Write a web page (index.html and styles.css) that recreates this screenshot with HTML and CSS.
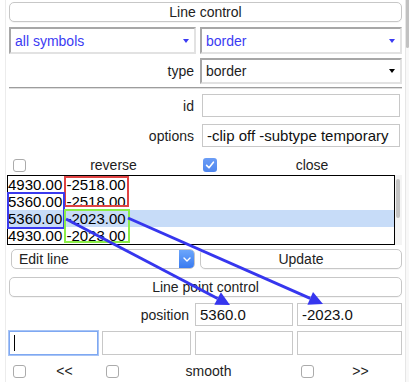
FILE: index.html
```html
<!DOCTYPE html>
<html lang="en">
<head>
    <meta charset="UTF-8">
    <title>Line control</title>
    <link rel="stylesheet" href="styles.css">
</head>
<body>
    <div class="app">
        <div class="panel">
            <button class="bar-btn row-a">Line control</button>

            <div class="pair row-b">
                <div class="select blue"><span>all symbols</span><i class="tri"></i></div>
                <div class="select blue"><span>border</span><i class="tri"></i></div>
            </div>

            <div class="pair row-c">
                <label class="lbl">type</label>
                <div class="select"><span>border</span><i class="tri"></i></div>
            </div>

            <hr class="sep">

            <div class="pair row-d">
                <label class="lbl">id</label>
                <div class="entry inset"></div>
            </div>

            <div class="pair row-e">
                <label class="lbl">options</label>
                <div class="entry inset">-clip off -subtype temporary</div>
            </div>

            <div class="pair row-f">
                <div class="check"><span class="box"></span><span class="check-text">reverse</span></div>
                <div class="check">
                    <span class="box on">
                        <svg width="14" height="14" viewBox="0 0 14 14"><path d="M3.6 7.4 L6 9.8 L10.4 4.2" fill="none" stroke="#fff" stroke-width="1.6" stroke-linecap="round" stroke-linejoin="round"/></svg>
                    </span>
                    <span class="check-text">close</span>
                </div>
            </div>

            <div class="list-row">
                <div class="listbox">
                    <div class="item">4930.00 -2518.00</div>
                    <div class="item">5360.00 -2518.00</div>
                    <div class="item sel">5360.00 -2023.00</div>
                    <div class="item">4930.00 -2023.00</div>
                </div>
                <div class="list-scroll"><div class="thumb"></div></div>
            </div>

            <div class="pair row-h">
                <div class="menubtn">
                    <span class="menu-text">Edit line</span>
                    <span class="menu-arrow">
                        <svg width="8" height="5" viewBox="0 0 8 5"><path d="M1 1 L4 4 L7 1" fill="none" stroke="#fff" stroke-width="1.4" stroke-linecap="round" stroke-linejoin="round"/></svg>
                    </span>
                </div>
                <button class="bar-btn">Update</button>
            </div>

            <button class="bar-btn row-i">Line point control</button>

            <div class="quad row-j">
                <label class="lbl span2">position</label>
                <div class="entry">5360.0</div>
                <div class="entry">-2023.0</div>
            </div>

            <div class="quad row-k">
                <div class="entry focus"><span class="caret"></span></div>
                <div class="entry"></div>
                <div class="entry"></div>
                <div class="entry"></div>
            </div>

            <div class="quad row-l">
                <div class="check"><span class="box"></span><span class="check-text">&lt;&lt;</span></div>
                <div class="check span2"><span class="box"></span><span class="check-text">smooth</span></div>
                <div class="check"><span class="box"></span><span class="check-text">&gt;&gt;</span></div>
            </div>
        </div>

        <div class="page-scroll"><div class="thumb"></div></div>

        <!-- annotation layer: boxes round the list cells and arrows to the entries -->
        <svg class="notes" width="409" height="382" viewBox="0 0 409 382">
            <rect x="65" y="177" width="63" height="29" fill="none" stroke="#df4343" stroke-width="2"/>
            <rect x="8" y="193" width="56" height="35" fill="none" stroke="#3a3aee" stroke-width="2"/>
            <rect x="65" y="210" width="64" height="32" fill="none" stroke="#8bee48" stroke-width="2"/>
            <line x1="66" y1="219" x2="217.6" y2="298.5" stroke="#3636ee" stroke-width="3"/>
            <polygon points="230,305 214.3,304.7 220.9,292.3" fill="#3636ee"/>
            <line x1="128" y1="218" x2="310.2" y2="298.3" stroke="#3636ee" stroke-width="3"/>
            <polygon points="323,304 307.4,304.7 313,291.9" fill="#3636ee"/>
        </svg>
    </div>
</body>
</html>
```

FILE: styles.css
```css
* {
    margin: 0;
    padding: 0;
    box-sizing: border-box;
}

body {
    font-family: "Liberation Sans", Arial, sans-serif;
    font-size: 14px;
    color: #1d1d1d;
    background: #fff;
    overflow: hidden;
}

.app {
    position: relative;
    display: flex;
    height: 100vh;
}

.panel {
    width: 400px;
    margin-left: 5px;
    padding: 2px 3px 0 3px;
    border-left: 1px solid #ececec;
    display: flex;
    flex-direction: column;
}

.panel > * {
    flex: none;
}

/* window scrollbar */
.page-scroll {
    width: 4px;
    border-left: 1px solid #e6e6e6;
    background: #f8f8f8;
}

.page-scroll .thumb {
    height: 48px;
    background: #c1c1c1;
    border-radius: 0 0 2px 2px;
}

/* rows */
.pair {
    display: grid;
    grid-template-columns: 187px 202px;
    column-gap: 4px;
}

.quad {
    display: grid;
    grid-template-columns: 89px 89px 98px 105px;
    column-gap: 4px;
}

.span2 {
    grid-column: span 2;
}

.row-a { height: 20px; }
.row-b { height: 27px; margin-top: 5px; }
.row-c { height: 26px; margin-top: 4px; }
.row-d { height: 23px; margin-top: 5px; }
.row-e { height: 23px; margin-top: 7px; }
.row-f { height: 14px; margin-top: 10px; }
.row-h { height: 20px; margin-top: 4px; }
.row-i { height: 20px; margin-top: 8px; }
.row-j { height: 23px; margin-top: 6px; }
.row-k { height: 24px; margin-top: 5px; }
.row-l { height: 14px; margin-top: 8px; }

.sep {
    height: 0;
    margin-top: 3px;
    border: 0;
    border-top: 1px solid #9d9d9d;
    border-bottom: 1px solid #dedede;
}

/* buttons */
.bar-btn {
    font-family: inherit;
    font-size: 14px;
    color: #222;
    background: #fff;
    border: 1px solid #c7c7c7;
    border-radius: 5px;
    box-shadow: 0 1px 0 rgba(0, 0, 0, 0.04);
    cursor: pointer;
}

.menubtn {
    display: flex;
    margin: 0 1px 0 2px;
    border: 1px solid #c7c7c7;
    border-radius: 5px;
    background: #fff;
    overflow: hidden;
}

.menu-text {
    flex: 1;
    display: flex;
    align-items: center;
    padding-left: 7px;
    font-size: 14px;
    color: #222;
}

.menu-arrow {
    width: 15px;
    display: flex;
    align-items: center;
    justify-content: center;
    background: linear-gradient(#6ca6fb, #3a7bf0);
}

/* labels */
.lbl {
    display: flex;
    align-items: center;
    justify-content: flex-end;
    padding-right: 2px;
}

/* option menus */
.select {
    display: flex;
    align-items: center;
    justify-content: space-between;
    padding: 0 5px 0 4px;
    border: 2px solid;
    border-color: #a7a7a7 #e2e2e2 #e2e2e2 #a7a7a7;
    background: #fff;
    font-size: 14px;
}

.select.blue {
    color: #3b3bf3;
}

.tri {
    width: 0;
    height: 0;
    border-left: 3.5px solid transparent;
    border-right: 3.5px solid transparent;
    border-top: 4px solid currentColor;
}

.select:not(.blue) .tri {
    color: #000;
}

/* entries */
.entry {
    display: flex;
    align-items: center;
    padding: 0 4px;
    border: 1px solid #c8c8c8;
    background: #fff;
    font-size: 15px;
    color: #111;
    white-space: nowrap;
    overflow: hidden;
}

.entry.inset {
    margin: 0 2px;
}

.entry.focus {
    border-color: #7ea8f2;
    box-shadow: 0 0 0 1px #a8c4f5;
}

.caret {
    width: 1px;
    height: 16px;
    background: #000;
}

/* checkbuttons */
.check {
    display: flex;
    align-items: center;
}

.box {
    width: 13px;
    height: 13px;
    margin-left: 4px;
    border: 1px solid #ababab;
    border-radius: 3px;
    background: #fff;
}

.box.on {
    width: 14px;
    height: 14px;
    margin-left: 3px;
    border: 0;
    background: linear-gradient(#6b9df6, #4f86ee);
}

.box.on svg {
    display: block;
}

.check-text {
    flex: 1;
    text-align: center;
    padding-left: 5px;
}

/* listbox */
.list-row {
    display: flex;
    height: 70px;
    margin-top: 4px;
    margin-left: -2px;
}

.listbox {
    width: 388px;
    border: 1px solid #000;
    font-size: 15px;
    color: #000;
}

.item {
    height: 17px;
    line-height: 17px;
    white-space: pre;
}

.item.sel {
    background: #c7dcf8;
}

.list-scroll {
    width: 7px;
    padding: 4px 2px 0 1px;
    background: #f4f4f4;
}

.list-scroll .thumb {
    height: 39px;
    background: #c3c3c3;
    border-radius: 2px;
}

/* annotations */
.notes {
    position: absolute;
    top: 0;
    left: 0;
    pointer-events: none;
}
```
